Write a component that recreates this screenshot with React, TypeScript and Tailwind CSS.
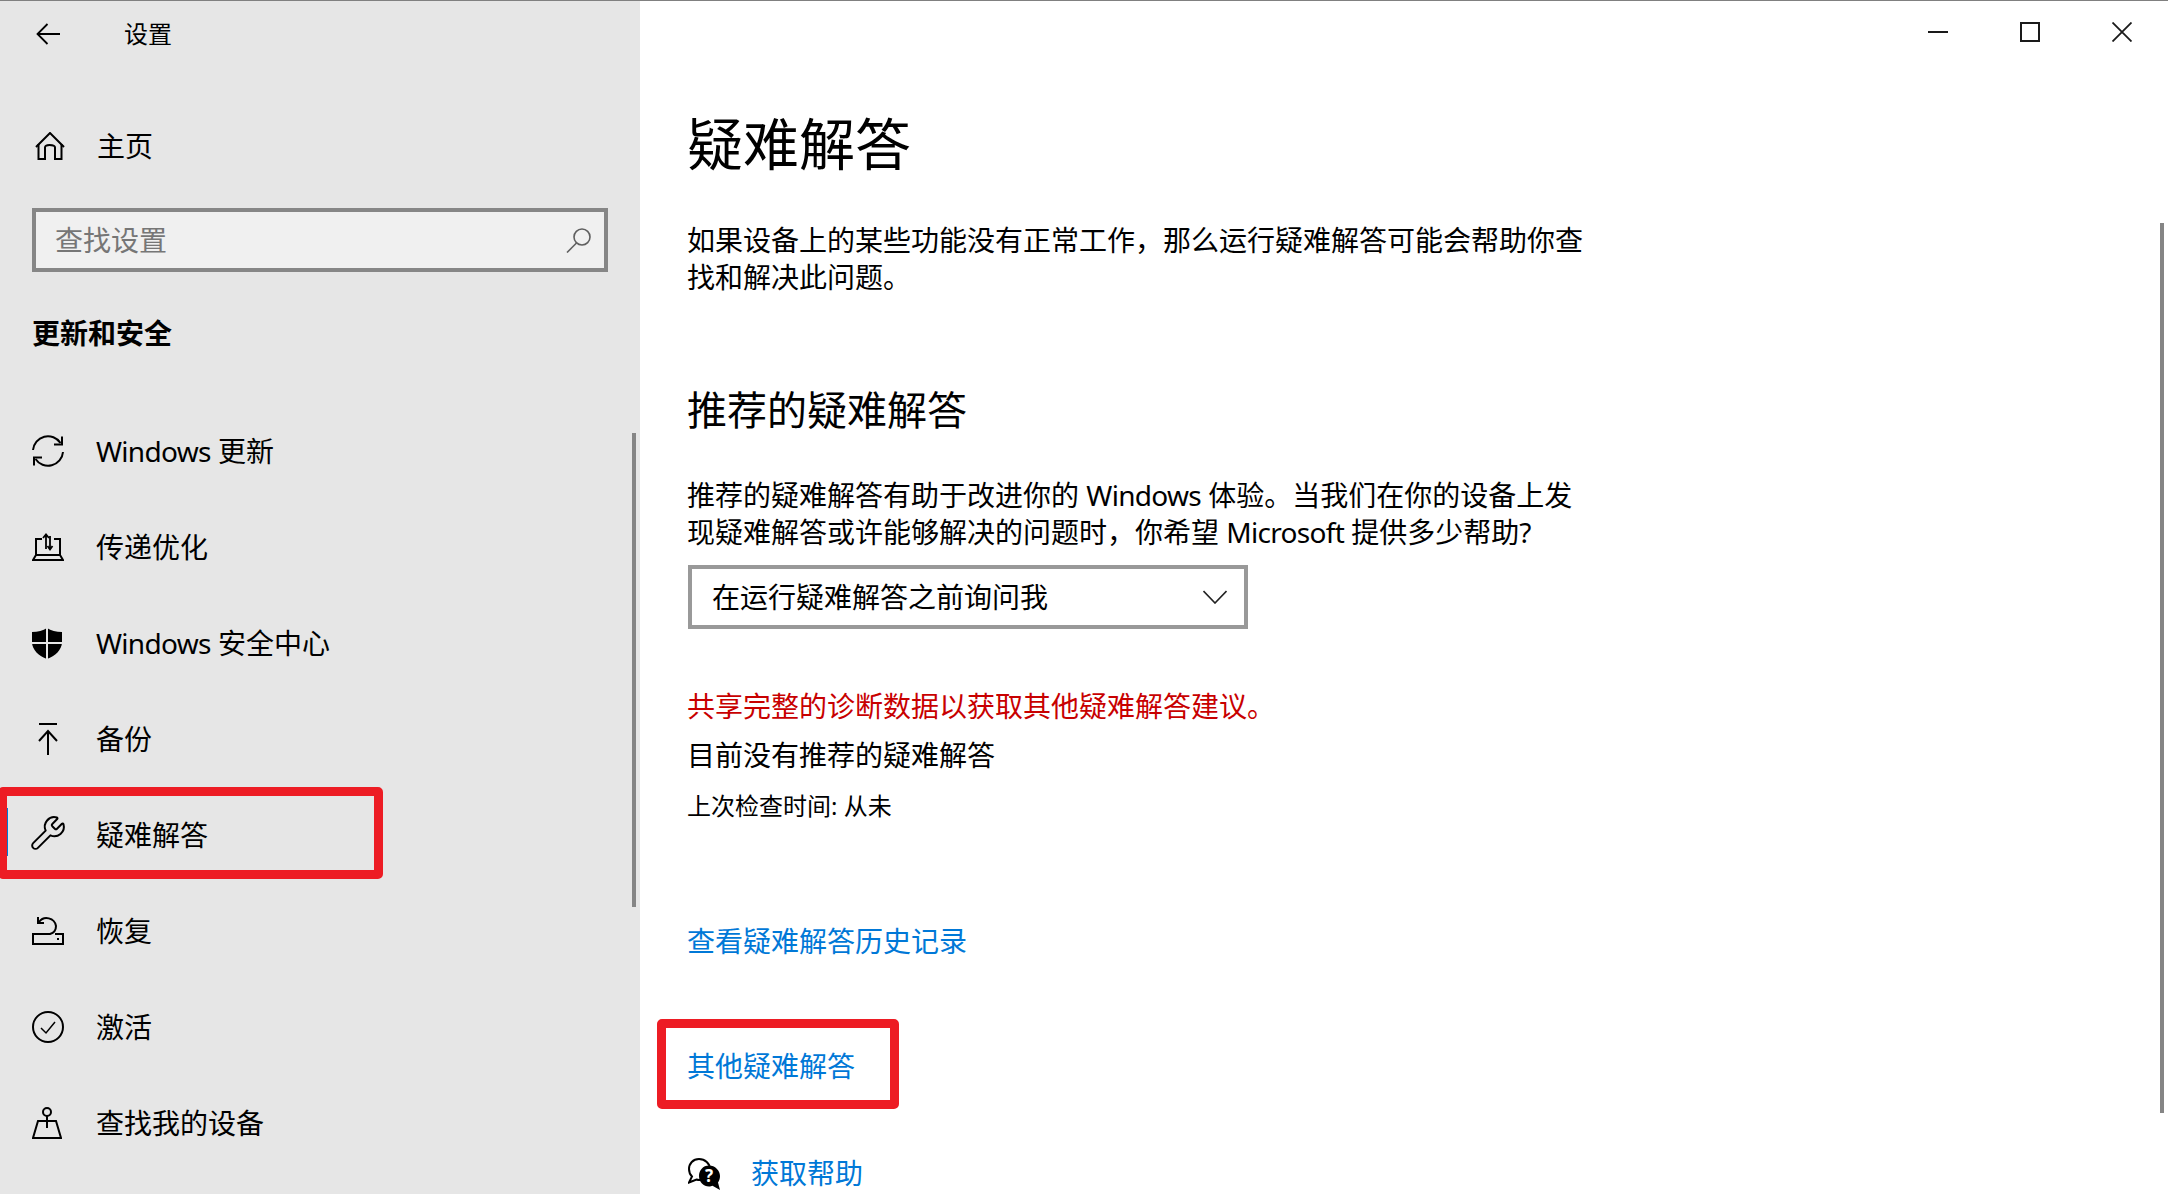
import type { ReactNode } from "react";
import { Wrench } from "lucide-react";

const fontStack = "font-['Noto_Sans','Noto_Sans_CJK_SC',sans-serif]";

// Segoe UI runs a bit narrower than Noto Sans, so Latin words get tightened
function Latin({ children }: { children: ReactNode }) {
  return <span className="tracking-[-0.7px]">{children}</span>;
}

function Sync() {
  return (
    <svg width="32" height="32" viewBox="0 0 32 32" fill="none" stroke="currentColor" strokeWidth="2">
      <path d="M1 15A15 15 0 0 1 28.5 8" />
      <path d="M30 1.500V9.500H22" />
      <path d="M31 17A15 15 0 0 1 3.500 24" />
      <path d="M2 30.500V22.500H10" />
    </svg>
  );
}

function Delivery() {
  return (
    <svg width="32" height="28" viewBox="0 0 32 28" fill="none" stroke="currentColor" strokeWidth="2">
      <path d="M10 6H4V22M22 6H28V22" />
      <path d="M4 22L1 27H31L28 22Z" />
      <path d="M14 16V2M11 5L14 1.500L17 5" strokeWidth="1.800" />
      <path d="M18 3V16M15.500 13L18 16.500L20.500 13" strokeWidth="1.800" />
    </svg>
  );
}

function Shield() {
  return (
    <svg width="30" height="31" viewBox="0 0 30 31">
      <path d="M15 0C19 2.500 24 4 30 4V14C30 22 23 28 15 31C7 28 0 22 0 14V4C6 4 11 2.500 15 0Z" fill="currentColor" />
      <path d="M15 0V31M0 15H30" stroke="#e6e6e6" strokeWidth="2" />
    </svg>
  );
}

function Backup() {
  return (
    <svg className="ml-1.5" width="20" height="32" viewBox="0 0 20 32" fill="none" stroke="currentColor" strokeWidth="2">
      <path d="M1 1H19" />
      <path d="M10 32V8M1 18L10 8L19 18" />
    </svg>
  );
}

function Recovery() {
  return (
    <svg width="32" height="28" viewBox="0 0 32 28" fill="none" stroke="currentColor" strokeWidth="2">
      <path d="M7 5A9.500 9.500 0 0 1 24 9C24 13 21.500 16 18 17H1V27H31V17H23" />
      <path d="M6 0V6H12" />
      <path d="M25 22H27" />
    </svg>
  );
}

function Activate() {
  return (
    <svg width="32" height="32" viewBox="0 0 32 32" fill="none" stroke="currentColor" strokeWidth="2">
      <circle cx="16" cy="16" r="15" />
      <path d="M9 17L14 22L23 11" strokeWidth="1.500" />
    </svg>
  );
}

function FindDevice() {
  return (
    <svg width="30" height="32" viewBox="0 0 30 32" fill="none" stroke="currentColor" strokeWidth="2">
      <circle cx="15" cy="5" r="4" />
      <path d="M15 9V21" />
      <path d="M6 14H24L29 31H1Z" />
    </svg>
  );
}

function Home() {
  return (
    <svg width="30" height="28" viewBox="0 0 30 28" fill="none" stroke="currentColor" strokeWidth="2">
      <path d="M1 15L15 1L29 15" />
      <path d="M3.500 12V27H10V15.500Q10 13 14.500 13Q20 13 20 15.500V27H26.500V12" />
    </svg>
  );
}

function BackArrow() {
  return (
    <svg width="24" height="22" viewBox="0 0 24 22" fill="none" stroke="currentColor" strokeWidth="1.800">
      <path d="M24 11H1.500M11.500 1L1.500 11L11.500 21" />
    </svg>
  );
}

function SearchGlyph() {
  return (
    <svg width="25" height="25" viewBox="0 0 25 25" fill="none" stroke="#5f5f5f" strokeWidth="1.600">
      <circle cx="16" cy="9" r="8" />
      <path d="M10.500 15L1 24.500" />
    </svg>
  );
}

function Help() {
  return (
    <svg width="32" height="32" viewBox="0 0 32 32">
      <path
        d="M11 1C5 1 1 5.500 1 11C1 14 2 16.500 4 18.500L1 24.500L8.500 21.500C9.500 21.800 10.500 22 11 22C17 22 22 17.500 22 11C22 5.500 17 1 11 1Z"
        fill="#fff"
        stroke="#000"
        strokeWidth="2"
      />
      <path d="M21 7.500C15 7.500 11 12.500 11 18C11 24 15.500 28.500 21 28.500C22.500 28.500 23.500 28.200 24.500 27.700L32 32L30 24.500C31 23 32 21 32 18C32 12.500 27 7.500 21 7.500Z" fill="#000" />
      <text x="21" y="24" textAnchor="middle" fontSize="17" fontWeight="700" fill="#fff" fontFamily="Noto Sans, sans-serif">
        ?
      </text>
    </svg>
  );
}

const navItems: { icon: ReactNode; label: ReactNode; active?: boolean }[] = [
  { icon: <Sync />, label: <><Latin>Windows</Latin> 更新</> },
  { icon: <Delivery />, label: "传递优化" },
  { icon: <Shield />, label: <><Latin>Windows</Latin> 安全中心</> },
  { icon: <Backup />, label: "备份" },
  { icon: <Wrench className="-m-[3px] -translate-y-0.5" size={38} strokeWidth={1.25} />, label: "疑难解答", active: true },
  { icon: <Recovery />, label: "恢复" },
  { icon: <Activate />, label: "激活" },
  { icon: <FindDevice />, label: "查找我的设备" },
];

function NavRow({ icon, label, active }: { icon: ReactNode; label: ReactNode; active?: boolean }) {
  return (
    <div className="relative flex h-24 items-center text-[28px] leading-9 text-black">
      <div className="flex w-24 shrink-0 pl-8">{icon}</div>
      <span>{label}</span>
      {active && (
        <>
          <div className="absolute left-[7px] top-[21px] h-12 w-px bg-[#0078d7]" />
          <div className="absolute left-[-2px] top-0 h-[92px] w-[385px] rounded-[5px] border-[9px] border-[#ed1c24]" />
        </>
      )}
    </div>
  );
}

export default function App() {
  return (
    <div className={`relative flex h-[1194px] w-full overflow-hidden border-t border-[#808080] bg-white text-black ${fontStack}`}>
      <aside className="relative h-full w-[640px] shrink-0 overflow-hidden bg-[#e6e6e6]">
        <header className="flex h-[66px] items-center pl-9">
          <BackArrow />
          <span className="ml-[64px] text-2xl leading-8">设置</span>
        </header>

        <div className="mt-[47px] flex h-16 items-center pl-[35px]">
          <Home />
          <span className="ml-[32px] text-[28px] leading-9">主页</span>
        </div>

        <div className="ml-8 mt-[30px] flex h-16 w-[576px] items-center justify-between border-4 border-[#868686] bg-[#f0f0f0] pl-[19px] pr-[13px]">
          <span className="text-[28px] leading-9 text-[#767676]">查找设置</span>
          <SearchGlyph />
        </div>

        <h2 className="ml-8 mt-[41px] h-10 text-[28px] font-bold leading-10">更新和安全</h2>

        <nav className="mt-[50px]">
          {navItems.map((item, i) => (
            <NavRow key={i} {...item} />
          ))}
        </nav>

        <div className="absolute left-[632px] top-[432px] h-[474px] w-1 bg-[#858585]" />
      </aside>

      <main className="relative flex-1 pl-[47px]">
        <h1 className="mt-[106px] text-[56px] font-normal leading-[72px]">疑难解答</h1>

        <p className="mt-[43px] text-[28px] leading-[37px]">
          如果设备上的某些功能没有正常工作，那么运行疑难解答可能会帮助你查
          <br />
          找和解决此问题。
        </p>

        <h2 className="mt-[86px] text-[40px] font-normal leading-14">推荐的疑难解答</h2>

        <p className="mt-[39px] text-[28px] leading-[37px]">
          推荐的疑难解答有助于改进你的 <Latin>Windows</Latin> 体验。当我们在你的设备上发
          <br />
          现疑难解答或许能够解决的问题时，你希望 <Latin>Microsoft</Latin> 提供多少帮助?
        </p>

        <div className="ml-px mt-[14px] flex h-16 w-[560px] items-center justify-between border-4 border-[#999999] pl-5 pr-[17px]">
          <span className="text-[28px] leading-9">在运行疑难解答之前询问我</span>
          <svg width="24" height="14" viewBox="0 0 24 14" fill="none" stroke="#222" strokeWidth="1.600">
            <path d="M0.500 1L12 13L23.500 1" />
          </svg>
        </div>

        <p className="mt-[59px] text-[28px] leading-[37px] text-[#c80000]">共享完整的诊断数据以获取其他疑难解答建议。</p>
        <p className="mt-[12px] text-[28px] leading-[37px]">目前没有推荐的疑难解答</p>
        <p className="mt-[16px] text-2xl leading-8">上次检查时间: 从未</p>

        <a className="mt-[101px] block text-[28px] leading-[37px] text-[#0078d7]">查看疑难解答历史记录</a>

        <div className="relative mt-[88px] w-fit">
          <a className="block text-[28px] leading-[37px] text-[#0078d7]">其他疑难解答</a>
          <div className="absolute left-[-30px] top-[-29px] h-[90px] w-[242px] rounded-[5px] border-[9px] border-[#ed1c24]" />
        </div>

        <div className="ml-px mt-[70px] flex items-center gap-[31px]">
          <Help />
          <a className="text-[28px] leading-[37px] text-[#0078d7]">获取帮助</a>
        </div>

        <div className="absolute right-9 top-[21px] flex items-start gap-[72px]">
          <div className="mt-[9px] h-0.5 w-5 bg-[#1a1a1a]" />
          <div className="size-5 border-2 border-[#1a1a1a]" />
          <svg width="20" height="20" viewBox="0 0 20 20" stroke="#1a1a1a" strokeWidth="1.800">
            <path d="M0.500 0.500L19.500 19.500M19.500 0.500L0.500 19.500" />
          </svg>
        </div>

        <div className="absolute right-1 top-[222px] h-[890px] w-1 bg-[#858585]" />
      </main>
    </div>
  );
}
